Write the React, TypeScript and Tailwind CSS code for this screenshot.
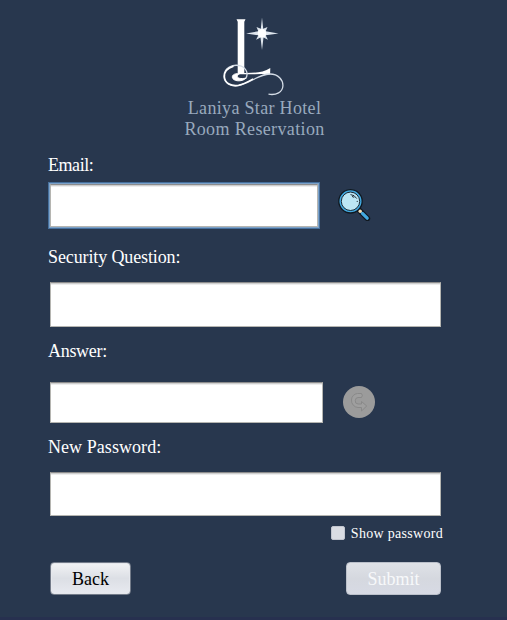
import React from "react";

const serif = "font-['Liberation_Serif','Times_New_Roman',serif]";
const label = "block h-5 whitespace-nowrap text-[18px] leading-5 text-white";
const field =
  "block rounded-none border border-[#b5b5b1] border-t-[#8c8c8c] bg-white px-2 text-[18px] text-black shadow-[inset_0_1px_0_#cfcfcf,inset_0_2px_0_#ededed] outline-none";

function Logo() {
  return (
    <svg className="block h-[82px] w-[66px]" viewBox="220.5 16 66 82" fill="none">
      {/* letter stem and foot */}
      <path d="M236 19.3H245L243.8 21.8V74H237.2V21.8Z" fill="#fff" />
      <path d="M237.4 73H246C254 73 263 72.5 269.8 68L269.6 74.4Q262 73.8 254 74.3H237.4Z" fill="#fff" />
      {/* outer loop, running into the long tail */}
      <path
        d="M245 79C248 74.5 246.6 68.5 240.5 66C232 63.5 223.5 68 223.5 76C223.5 83 230 87 238 85.6C249 83.5 258 74.3 269 74C278 73.8 282.7 80 282.4 86C282 92 276 95.6 268 94.2"
        stroke="#d3dbe5"
        strokeWidth="1.3"
      />
      <path
        d="M233 66.3C226.5 68.3 223.6 72 223.9 77C224.5 83.5 231 86.5 238 85.3C243.5 84.2 248 81.5 252.5 79"
        stroke="#fff"
        strokeWidth="1.6"
      />
      {/* inner curl */}
      <path
        d="M239 73.8C233 73 230.8 76 232.3 78.5C234.5 81.8 242.5 81.5 245.3 78.2C237 79.6 234.5 76.5 239 73.8Z"
        fill="#fff"
        stroke="#fff"
        strokeWidth="1"
      />
      {/* star */}
      <path
        d="M261.5 17.5L262.7 28.8L267 27L265.2 31.3L278 33.4L265.2 35.3L267.4 39.7L263 37.6L261.5 50L260 37.6L255.6 39.7L257.8 35.3L245.5 33.4L257.8 31.3L256 27L260.3 28.8Z"
        fill="#dfe6ee"
      />
      <circle cx="261.5" cy="33.3" r="4.2" fill="#fff" />
    </svg>
  );
}

function SearchIcon() {
  return (
    <svg className="block h-[34px] w-[34px]" viewBox="337 187 34 34" fill="none">
      <path d="M359 210L367.5 218.5" stroke="#101820" strokeWidth="5.4" strokeLinecap="round" />
      <path d="M362.4 213.4L367.2 218.2" stroke="#43a9e0" strokeWidth="3.2" strokeLinecap="round" />
      <circle cx="350.5" cy="201.3" r="11.7" fill="#43a9e0" stroke="#101820" strokeWidth="1.3" />
      <circle cx="350.5" cy="201.3" r="9.2" fill="#bce6f4" stroke="#101820" strokeWidth="0.9" />
      <circle cx="360.2" cy="211.2" r="1.7" fill="#f5dfb8" />
      <path d="M350.5 194.6Q354.5 194.8 356.8 198.6M352 196.4L354.2 197.4" stroke="#101820" strokeWidth="0.9" />
      <circle cx="357.2" cy="201.3" r=".6" fill="#101820" />
    </svg>
  );
}

function NextIcon() {
  return (
    <svg className="block h-8 w-8" viewBox="0 0 32 32" fill="none">
      <circle cx="16" cy="16" r="16" fill="#9b9b9b" />
      <path
        d="M18.5 7.5H14.5A6.5 6.5 0 0 0 8.5 14A7 7 0 0 0 15 21.5H18.5V25L23.7 20L18.5 15.5V18H15A3 3 0 0 1 12.3 14.5A3 3 0 0 1 15 11.5H18.5Q20.2 9.5 18.5 7.5Z"
        fill="#9f9f9f"
        stroke="#898989"
        strokeWidth="1"
        strokeLinejoin="round"
      />
    </svg>
  );
}

export default function App() {
  return (
    <div className={`h-[620px] w-[507px] overflow-hidden border-b-[3px] border-[#27304f] bg-[#28374e] ${serif}`}>
      <header className="flex h-[155px] w-[507px] flex-col items-center pt-4">
        <Logo />
        <div className="ml-0.5 whitespace-nowrap text-center text-[18px] leading-[21px] text-[#98a9bd]">
          <div className="tracking-[0.32px]">Laniya Star Hotel</div>
          <div className="tracking-[0.36px]">Room Reservation</div>
        </div>
      </header>
      <form className="ml-12 w-[395px]" onSubmit={(e) => e.preventDefault()}>
        <label htmlFor="email" className={`${label} tracking-[-0.45px]`}>Email:</label>
        <div className="mt-[7px] flex h-[47px]">
          <div className="h-[47px] w-[272px] border border-[#46709d] bg-[#7da2c9] p-px">
            <input id="email" className={`${field} h-[43px] w-[268px]`} />
          </div>
          <button type="button" aria-label="Search" className="ml-[17px] mt-[5px] h-[34px]">
            <SearchIcon />
          </button>
        </div>
        <label htmlFor="question" className={`${label} mt-[18px] tracking-[-0.12px]`}>Security Question:</label>
        <input id="question" className={`${field} ml-0.5 mt-[15px] h-[45px] w-[391px]`} />
        <label htmlFor="answer" className={`${label} mt-[14px] tracking-[-0.3px]`}>Answer:</label>
        <div className="ml-0.5 mt-[21px] flex h-[41px]">
          <input id="answer" className={`${field} h-[41px] w-[273px]`} />
          <button type="button" aria-label="Check answer" disabled className="ml-5 mt-1 h-8">
            <NextIcon />
          </button>
        </div>
        <label htmlFor="password" className={`${label} mt-[14px] tracking-[0.06px]`}>New Password:</label>
        <input id="password" type="password" className={`${field} ml-0.5 mt-[15px] h-[44px] w-[391px]`} />
        <label className="mt-[9px] flex h-4 items-center justify-end whitespace-nowrap text-[14px] leading-4 tracking-[0.3px] text-white">
          <input
            type="checkbox"
            className="mr-1.5 h-3.5 w-3.5 appearance-none rounded-[2px] border border-[#c1c5cf] bg-[#d9dce3]"
          />
          <span className="pt-px">Show password</span>
        </label>
        <div className="ml-0.5 mt-[21px] flex w-[391px] justify-between">
          <button
            type="button"
            className="h-[33px] w-[81px] rounded-[4px] border border-[#737b89] bg-linear-to-b from-[#f2f3f5] via-[#dcdfe5] to-[#e8eaf0] text-[18px] leading-5 text-black shadow-[inset_0_0_0_1px_#e5e7ec]"
          >
            Back
          </button>
          <button
            type="submit"
            disabled
            className="h-[33px] w-[95px] rounded-[4px] border border-[#bbc0ca] bg-linear-to-b from-[#dfe2e7] via-[#d5d8df] to-[#d7dae4] text-[18px] leading-5 text-[#f7f8fa]"
          >
            Submit
          </button>
        </div>
      </form>
    </div>
  );
}
